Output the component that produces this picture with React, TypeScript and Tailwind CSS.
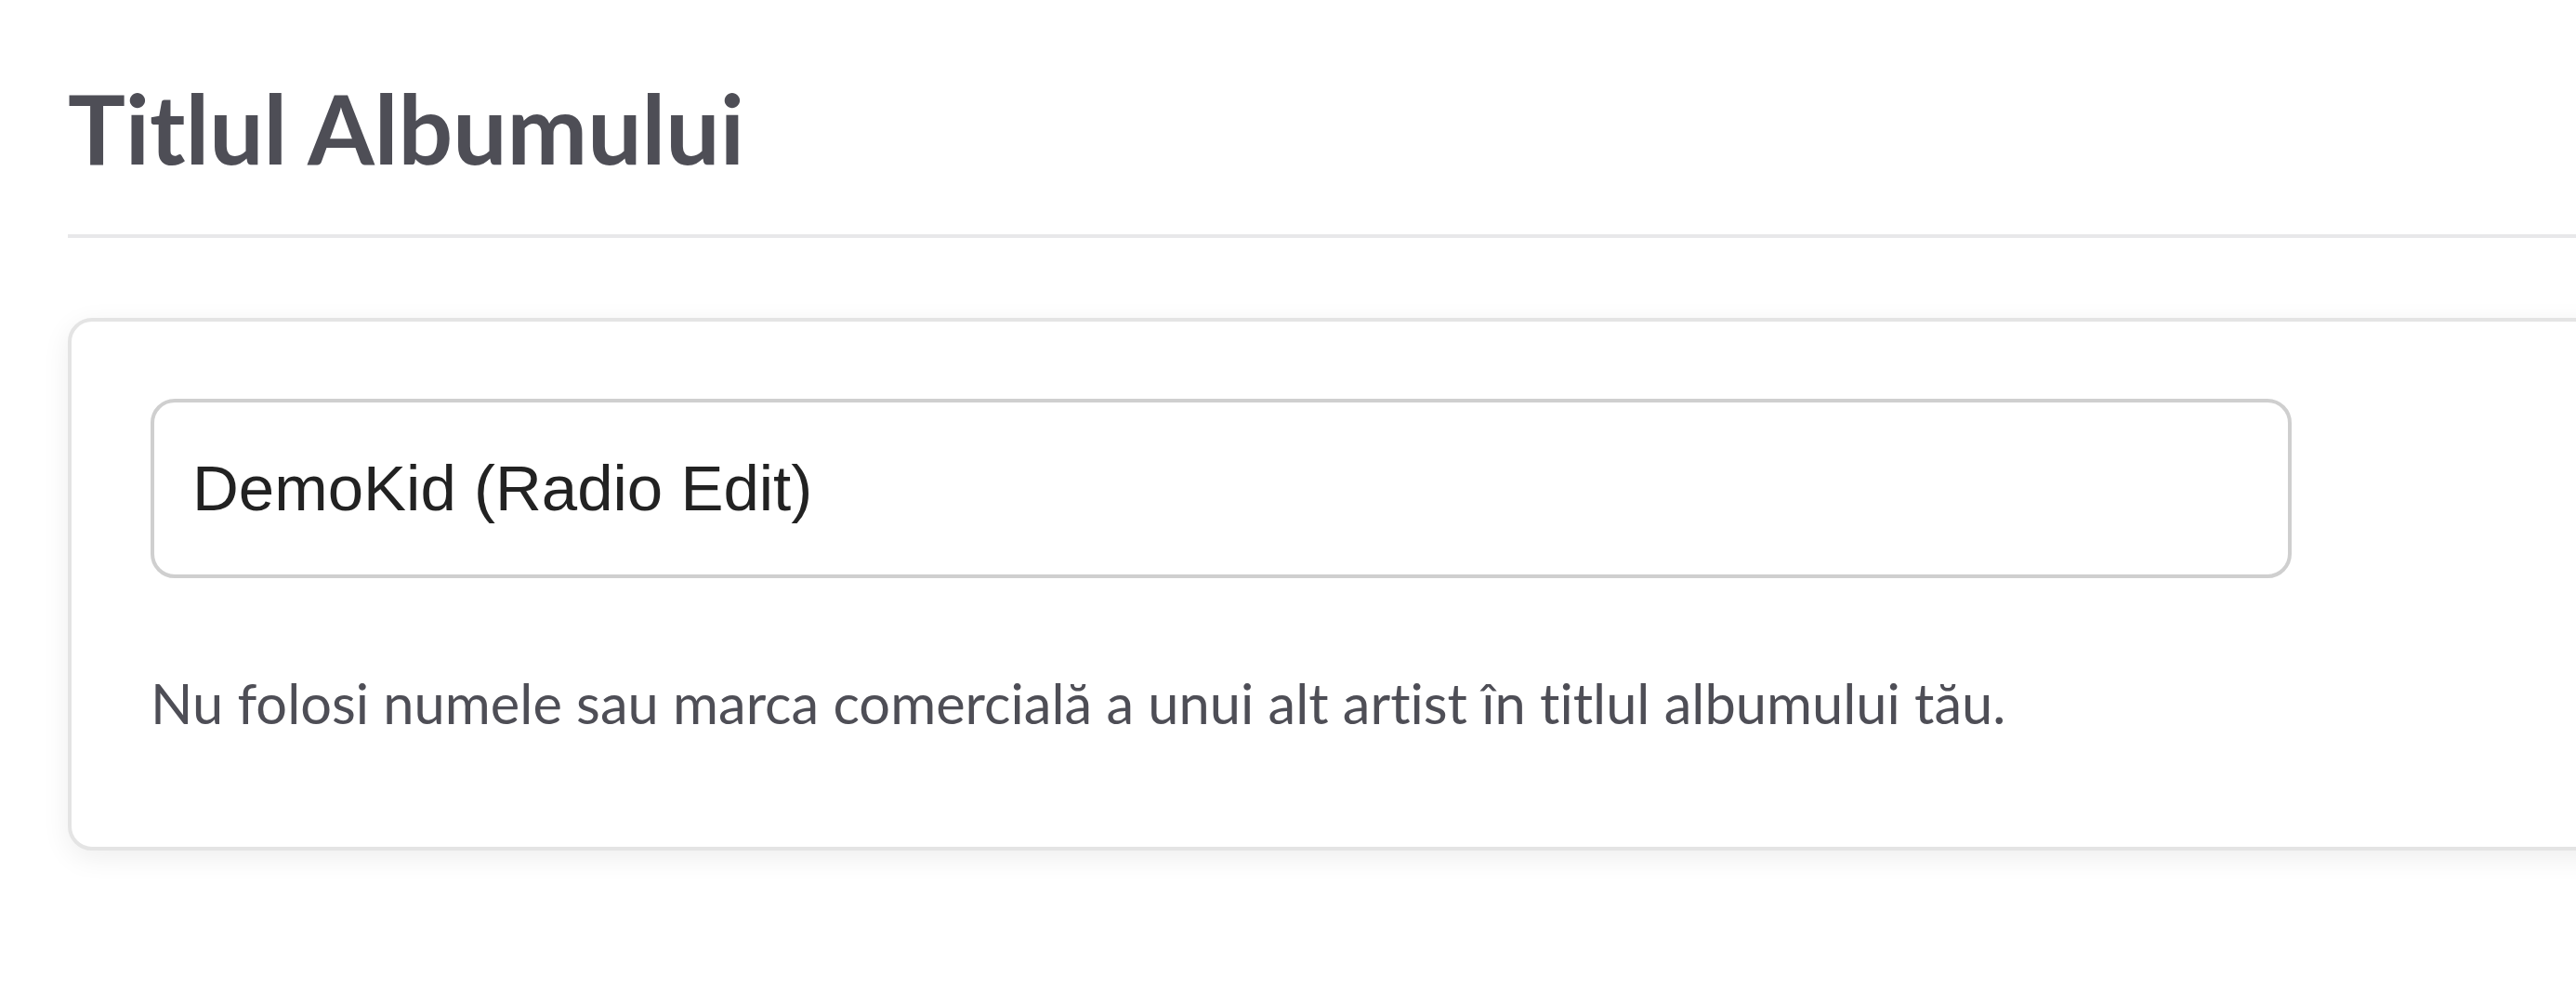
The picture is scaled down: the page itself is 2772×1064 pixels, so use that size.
import React from 'react';

const AlbumTitle = () => {
  return (
    <div className="min-h-screen w-full overflow-hidden bg-white pl-[73px] pt-[86px] font-['Lato',sans-serif] [font-variant-ligatures:none]">
      <h1 className="text-[103.5px] font-bold leading-none text-[#4e4e56]">
        Titlul Albumului
      </h1>
      <div className="mt-[62px] h-[4px] w-full bg-[#e8e8ea]"></div>
      <div className="mt-[86px] -mr-[120px] rounded-[26px] border-[4px] border-[#e4e4e4] bg-white pt-[83px] pb-[125px] pl-[85px] shadow-[0_8px_30px_rgba(0,0,0,0.07)]">
        <input
          className="block h-[193px] w-[2304px] rounded-[26px] border-[4px] border-[#cfcfcf] bg-white pl-[41px] font-['Liberation_Sans',Arial,sans-serif] text-[69px] text-[#222222] outline-none"
          defaultValue="DemoKid (Radio Edit)"
        />
        <p className="mt-[105px] text-[59.6px] leading-none text-[#4e4e56]">
          Nu folosi numele sau marca comercială a unui alt artist în titlul albumului tău.
        </p>
      </div>
    </div>
  );
};

export default AlbumTitle;
